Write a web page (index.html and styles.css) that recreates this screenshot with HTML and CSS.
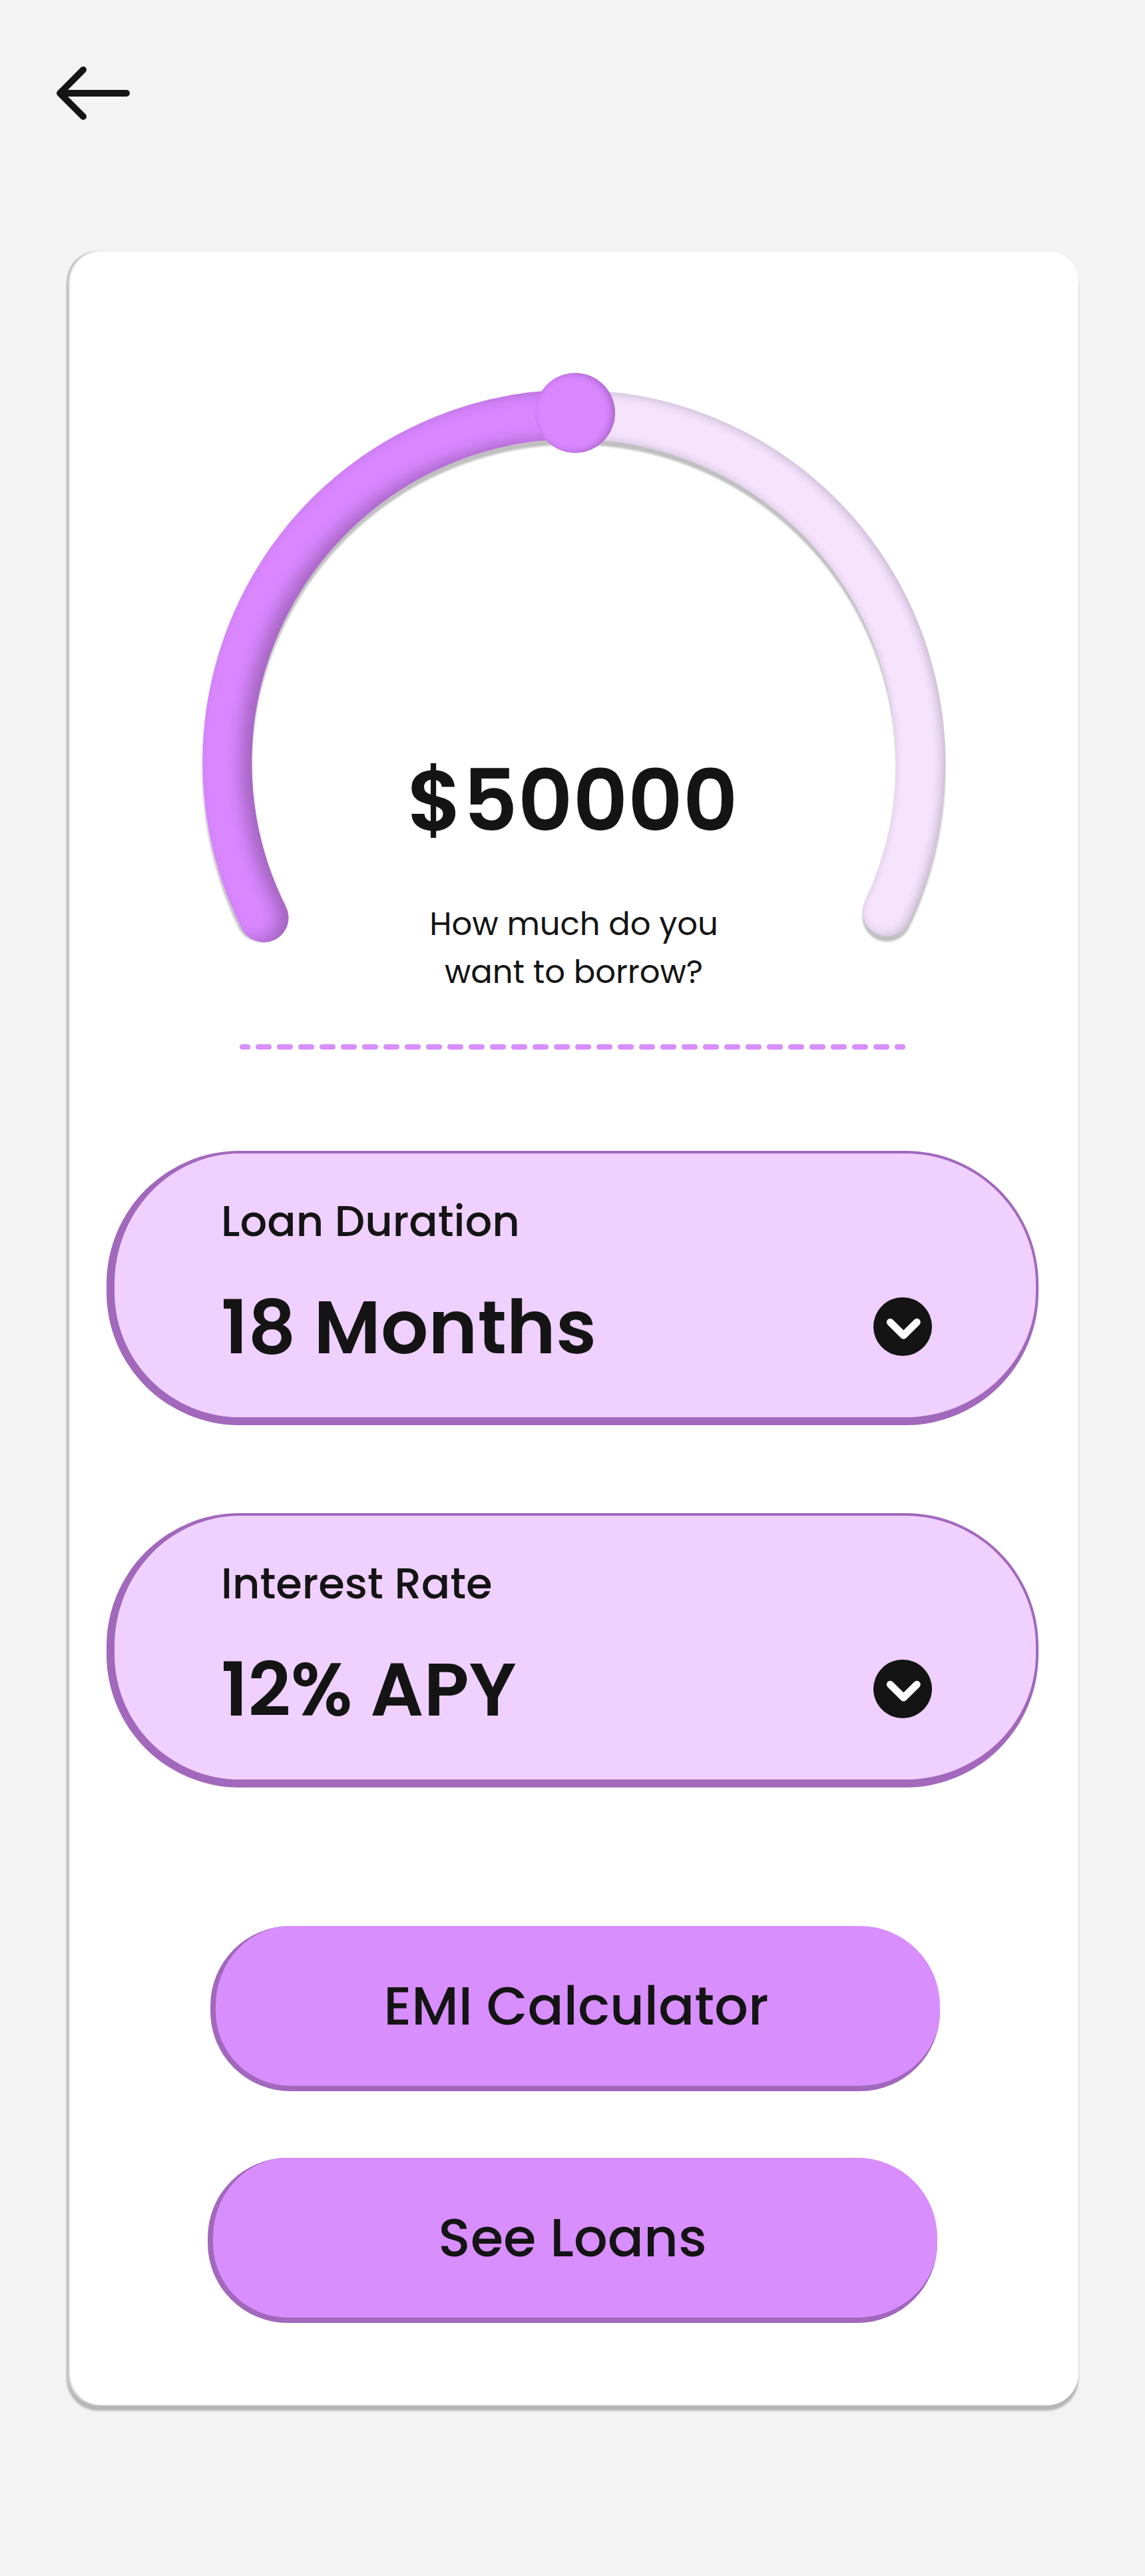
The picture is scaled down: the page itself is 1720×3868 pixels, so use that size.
FILE: index.html
```html
<!DOCTYPE html>
<html lang="en">
<head>
<meta charset="utf-8">
<title>Borrow</title>
<link rel="stylesheet" href="styles.css">
</head>
<body>
<header class="topbar">
  <a class="back" href="#" aria-label="Back">
    <svg width="110" height="80" viewBox="0 0 110 80"><path d="M105 40H5M40 4.8L5 40L40 75" /></svg>
  </a>
</header>
<main class="card">
  <section class="gauge">
    <svg class="gauge-dial" width="1520" height="1140" viewBox="100 376 1520 1140">
      <defs>
        <filter id="track-shade" filterUnits="userSpaceOnUse" x="280" y="540" width="1180" height="920" color-interpolation-filters="sRGB">
          <feFlood flood-color="#000" flood-opacity="1" result="black"/>
          <feComposite in="black" in2="SourceAlpha" operator="out" result="outside"/>
          <feOffset in="outside" dx="-4" dy="0"/>
          <feGaussianBlur stdDeviation="8"/>
          <feComponentTransfer><feFuncA type="linear" slope="0.22"/></feComponentTransfer>
          <feComposite in2="SourceAlpha" operator="in" result="inner"/>
          <feGaussianBlur in="SourceAlpha" stdDeviation="1.5"/>
          <feOffset dx="0" dy="8"/>
          <feComponentTransfer result="drop"><feFuncA type="linear" slope="0.25"/></feComponentTransfer>
          <feMerge><feMergeNode in="drop"/><feMergeNode in="SourceGraphic"/><feMergeNode in="inner"/></feMerge>
        </filter>
        <filter id="fill-shade" filterUnits="userSpaceOnUse" x="280" y="540" width="680" height="920" color-interpolation-filters="sRGB">
          <feFlood flood-color="#000" flood-opacity="1" result="black"/>
          <feComposite in="black" in2="SourceAlpha" operator="out"/>
          <feOffset dx="-16" dy="0"/>
          <feGaussianBlur stdDeviation="12"/>
          <feComponentTransfer><feFuncA type="linear" slope="0.25"/></feComponentTransfer>
          <feComposite in2="SourceAlpha" operator="in" result="inner"/>
          <feMerge><feMergeNode in="SourceGraphic"/><feMergeNode in="inner"/></feMerge>
        </filter>
        <filter id="knob-shade" filterUnits="userSpaceOnUse" x="770" y="530" width="190" height="180" color-interpolation-filters="sRGB">
          <feFlood flood-color="#000" flood-opacity="1" result="black"/>
          <feComposite in="black" in2="SourceAlpha" operator="out"/>
          <feOffset dx="-4" dy="0"/>
          <feGaussianBlur stdDeviation="6"/>
          <feComponentTransfer><feFuncA type="linear" slope="0.25"/></feComponentTransfer>
          <feComposite in2="SourceAlpha" operator="in" result="inner"/>
          <feMerge><feMergeNode in="SourceGraphic"/><feMergeNode in="inner"/></feMerge>
        </filter>
      </defs>
      <g filter="url(#track-shade)"><path class="track" d="M391.5 1369A521 522 0 1 1 1332.5 1369"/></g>
      <g filter="url(#fill-shade)"><path class="fill" d="M396.5 1378A521 522 0 0 1 862 622.3"/></g>
      <circle class="knob" cx="864" cy="620" r="60" filter="url(#knob-shade)"/>
    </svg>
    <div class="gauge-text">
      <div class="amount">$50000</div>
      <p class="question">How much do you<br>want to borrow?</p>
    </div>
  </section>
  <svg class="divider" width="1000" height="8" viewBox="0 0 1000 8"><path d="M4 4H996"/></svg>
  <section class="fields">
    <div class="field">
      <div class="field-label">Loan Duration</div>
      <div class="field-row">
        <span class="field-value">18 Months</span>
        <svg class="chevron" width="88" height="88" viewBox="0 0 88 88"><circle cx="44" cy="44" r="44"/><path d="M25.3 37.3L45.3 57.2L65.3 37.3"/></svg>
      </div>
    </div>
    <div class="field">
      <div class="field-label">Interest Rate</div>
      <div class="field-row">
        <span class="field-value">12% APY</span>
        <svg class="chevron" width="88" height="88" viewBox="0 0 88 88"><circle cx="44" cy="44" r="44"/><path d="M25.3 37.3L45.3 57.2L65.3 37.3"/></svg>
      </div>
    </div>
  </section>
  <section class="actions">
    <button class="btn btn-emi">EMI Calculator</button>
    <button class="btn">See Loans</button>
  </section>
</main>
</body>
</html>
```
FILE: styles.css
```css
* {
  box-sizing: border-box;
}

body {
  margin: 0;
  height: 3868px;
  background: #f3f3f3;
  color: #141414;
  font-family: Poppins, Inter, sans-serif;
  line-height: 1.5;
}

.topbar {
  height: 376px;
  padding: 100px 0 0 85px;
}

.back {
  display: block;
  width: 110px;
  height: 80px;
}

.back svg {
  display: block;
  fill: none;
  stroke: #141414;
  stroke-width: 10;
  stroke-linecap: round;
  stroke-linejoin: round;
}

.card {
  display: flex;
  flex-direction: column;
  align-items: center;
  width: 1520px;
  height: 3236px;
  margin-left: 100px;
  border-radius: 48px;
  background: #fff;
  box-shadow: 0 8px 3px rgba(0, 0, 0, 0.25), inset 4px 0 3px rgba(0, 0, 0, 0.25);
}

.gauge {
  display: grid;
  width: 1520px;
  height: 1140px;
}

.gauge-dial,
.gauge-text {
  grid-area: 1 / 1;
}

.track,
.fill {
  fill: none;
  stroke-width: 74;
  stroke-linecap: round;
}

.track {
  stroke: #f6e4ff;
}

.fill {
  stroke: #d986ff;
}

.knob {
  fill: #d986ff;
}

.gauge-text {
  padding-top: 731px;
  text-align: center;
}

.amount {
  font-size: 128px;
  font-weight: 600;
}

.question {
  margin: 53px 0 0 4px;
  font-size: 48px;
}

.divider {
  display: block;
  margin-top: 52px;
  fill: none;
  stroke: #d88efc;
  stroke-width: 8;
  stroke-linecap: round;
  stroke-dasharray: 16;
  stroke-dashoffset: 8;
}

.fields {
  display: flex;
  flex-direction: column;
  gap: 132px;
  margin-top: 152px;
}

.field {
  width: 1400px;
  height: 412px;
  padding: 54px 156px 0 160px;
  border: solid #a168bc;
  border-width: 4px 4px 12px 12px;
  border-radius: 200px;
  background: #efd0ff;
}

.field-label {
  font-size: 64px;
  font-weight: 500;
}

.field-row {
  display: flex;
  align-items: center;
  justify-content: space-between;
  margin-top: 27px;
}

.field-value {
  font-size: 112px;
  font-weight: 600;
}

.chevron {
  margin-bottom: 2px;
  fill: #141414;
}

.chevron path {
  fill: none;
  stroke: #fff;
  stroke-width: 11;
  stroke-linecap: round;
  stroke-linejoin: round;
}

.actions {
  display: flex;
  flex-direction: column;
  align-items: center;
  gap: 100px;
  margin-top: 208px;
}

.btn {
  width: 1096px;
  height: 248px;
  padding: 0 8px 0 0;
  border: solid #a168bc;
  border-width: 0 0 8px 8px;
  border-radius: 120px;
  background: #d88efc;
  color: inherit;
  font: 500 80px/1.5 Poppins, Inter, sans-serif;
}

.btn-emi {
  margin-left: 8px;
  padding-right: 5px;
}
```
